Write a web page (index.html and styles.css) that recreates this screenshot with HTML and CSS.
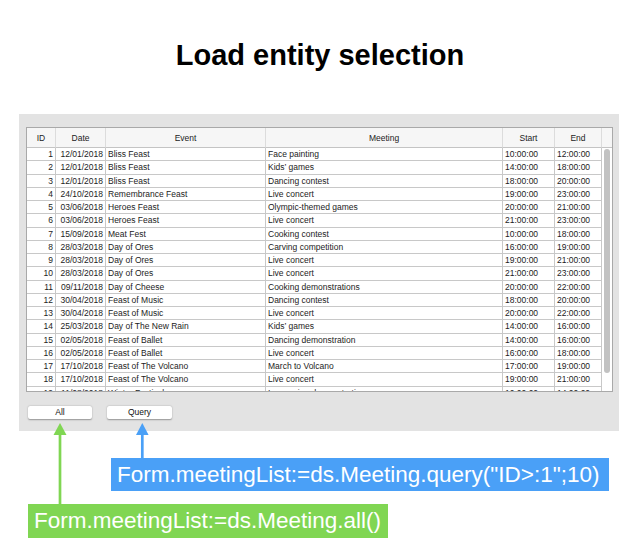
FILE: index.html
```html
<!DOCTYPE html>
<html>
<head>
<meta charset="utf-8">
<link rel="stylesheet" href="styles.css">
</head>
<body>
<h1 class="title">Load entity selection</h1>
<div class="panel">
  <div class="grid-wrap">
    <div class="grid">
      <div class="hc">ID</div><div class="hc">Date</div><div class="hc">Event</div><div class="hc">Meeting</div><div class="hc">Start</div><div class="hc">End</div><div class="hc sbh"></div>

      <div class="c r">1</div><div class="c r">12/01/2018</div><div class="c">Bliss Feast</div><div class="c">Face painting</div><div class="c">10:00:00</div><div class="c">12:00:00</div><div class="sb"></div>
      <div class="c r">2</div><div class="c r">12/01/2018</div><div class="c">Bliss Feast</div><div class="c">Kids’ games</div><div class="c">14:00:00</div><div class="c">18:00:00</div><div class="sb"></div>
      <div class="c r">3</div><div class="c r">12/01/2018</div><div class="c">Bliss Feast</div><div class="c">Dancing contest</div><div class="c">18:00:00</div><div class="c">20:00:00</div><div class="sb"></div>
      <div class="c r">4</div><div class="c r">24/10/2018</div><div class="c">Remembrance Feast</div><div class="c">Live concert</div><div class="c">19:00:00</div><div class="c">23:00:00</div><div class="sb"></div>
      <div class="c r">5</div><div class="c r">03/06/2018</div><div class="c">Heroes Feast</div><div class="c">Olympic-themed games</div><div class="c">20:00:00</div><div class="c">21:00:00</div><div class="sb"></div>
      <div class="c r">6</div><div class="c r">03/06/2018</div><div class="c">Heroes Feast</div><div class="c">Live concert</div><div class="c">21:00:00</div><div class="c">23:00:00</div><div class="sb"></div>
      <div class="c r">7</div><div class="c r">15/09/2018</div><div class="c">Meat Fest</div><div class="c">Cooking contest</div><div class="c">10:00:00</div><div class="c">18:00:00</div><div class="sb"></div>
      <div class="c r">8</div><div class="c r">28/03/2018</div><div class="c">Day of Ores</div><div class="c">Carving competition</div><div class="c">16:00:00</div><div class="c">19:00:00</div><div class="sb"></div>
      <div class="c r">9</div><div class="c r">28/03/2018</div><div class="c">Day of Ores</div><div class="c">Live concert</div><div class="c">19:00:00</div><div class="c">21:00:00</div><div class="sb"></div>
      <div class="c r">10</div><div class="c r">28/03/2018</div><div class="c">Day of Ores</div><div class="c">Live concert</div><div class="c">21:00:00</div><div class="c">23:00:00</div><div class="sb"></div>
      <div class="c r">11</div><div class="c r">09/11/2018</div><div class="c">Day of Cheese</div><div class="c">Cooking demonstrations</div><div class="c">20:00:00</div><div class="c">22:00:00</div><div class="sb"></div>
      <div class="c r">12</div><div class="c r">30/04/2018</div><div class="c">Feast of Music</div><div class="c">Dancing contest</div><div class="c">18:00:00</div><div class="c">20:00:00</div><div class="sb"></div>
      <div class="c r">13</div><div class="c r">30/04/2018</div><div class="c">Feast of Music</div><div class="c">Live concert</div><div class="c">20:00:00</div><div class="c">22:00:00</div><div class="sb"></div>
      <div class="c r">14</div><div class="c r">25/03/2018</div><div class="c">Day of The New Rain</div><div class="c">Kids’ games</div><div class="c">14:00:00</div><div class="c">16:00:00</div><div class="sb"></div>
      <div class="c r">15</div><div class="c r">02/05/2018</div><div class="c">Feast of Ballet</div><div class="c">Dancing demonstration</div><div class="c">14:00:00</div><div class="c">16:00:00</div><div class="sb"></div>
      <div class="c r">16</div><div class="c r">02/05/2018</div><div class="c">Feast of Ballet</div><div class="c">Live concert</div><div class="c">16:00:00</div><div class="c">18:00:00</div><div class="sb"></div>
      <div class="c r">17</div><div class="c r">17/10/2018</div><div class="c">Feast of The Volcano</div><div class="c">March to Volcano</div><div class="c">17:00:00</div><div class="c">19:00:00</div><div class="sb"></div>
      <div class="c r">18</div><div class="c r">17/10/2018</div><div class="c">Feast of The Volcano</div><div class="c">Live concert</div><div class="c">19:00:00</div><div class="c">21:00:00</div><div class="sb"></div>
      <div class="c r">19</div><div class="c r">11/08/2018</div><div class="c">Winter Festival</div><div class="c">Ice carving demonstration</div><div class="c">10:00:00</div><div class="c">14:00:00</div><div class="sb"></div>
    </div>
    <div class="thumb"></div>
  </div>
  <div class="buttons">
    <button class="btn btn-all">All</button>
    <button class="btn btn-query">Query</button>
  </div>
</div>
<div class="notes">
  <svg class="arrows" width="200" height="100" viewBox="0 0 200 100">
    <line x1="60" y1="12" x2="60" y2="84" stroke="#80d653" stroke-width="2.7"/>
    <polygon points="60,3 53.5,15 66.5,15" fill="#80d653"/>
    <line x1="142.3" y1="12" x2="142.3" y2="38" stroke="#4aa0f7" stroke-width="2.7"/>
    <polygon points="142.3,3 136,15 148.6,15" fill="#4aa0f7"/>
  </svg>
  <div class="label label-blue">Form.meetingList:=ds.Meeting.query("ID&gt;:1";10)</div>
  <div class="label label-green">Form.meetingList:=ds.Meeting.all()</div>
</div>
</body>
</html>
```

FILE: styles.css
```css
html, body {
  margin: 0;
  padding: 0;
  background: #ffffff;
}
body {
  width: 640px;
  height: 560px;
  overflow: hidden;
  font-family: "Liberation Sans", Arial, sans-serif;
}
.title {
  margin: 0;
  height: 114px;
  box-sizing: border-box;
  padding-top: 39px;
  font-size: 29px;
  line-height: 32px;
  font-weight: bold;
  color: #000;
  text-align: center;
}
.panel {
  margin-left: 19px;
  width: 600px;
  height: 317px;
  box-sizing: border-box;
  padding: 13px 7px 0 7px;
  background: #e3e3e3;
}
.grid-wrap {
  position: relative;
  width: 587px;
  height: 265px;
  box-sizing: border-box;
  border: 1px solid #a9a9a9;
  background: #fff;
  overflow: hidden;
}
.grid {
  display: grid;
  grid-template-columns: 29px 50px 160px 237px 52px 47px 10px;
  grid-template-rows: 20px;
  grid-auto-rows: 13.25px;
  font-size: 8.5px;
  color: #1c1c1c;
}
.hc {
  background: #f6f6f6;
  border-right: 1px solid #dcdcdc;
  border-bottom: 1px solid #c4c4c4;
  box-sizing: border-box;
  display: flex;
  align-items: center;
  justify-content: center;
  white-space: nowrap;
}
.hc.sbh {
  border-right: none;
}
.c {
  box-sizing: border-box;
  border-right: 1px solid #c8c8c8;
  border-bottom: 1px solid #c8c8c8;
  display: flex;
  align-items: center;
  padding: 0 2px;
  white-space: nowrap;
  overflow: hidden;
}
.c.r {
  justify-content: flex-end;
  padding: 0 2px 0 0;
}
.sb {
  background: #fff;
}
.thumb {
  position: absolute;
  left: 577px;
  top: 21px;
  width: 6px;
  height: 224px;
  border-radius: 3px;
  background: #c2c2c2;
}
.buttons {
  display: flex;
  gap: 15px;
  margin: 14px 0 0 2px;
}
.btn {
  height: 13px;
  padding: 0;
  margin: 0;
  border: none;
  border-radius: 2px;
  background: #fff;
  box-shadow: 0 0.5px 1.5px rgba(0, 0, 0, 0.35);
  font-family: "Liberation Sans", Arial, sans-serif;
  font-size: 8.5px;
  color: #111;
  line-height: 13px;
}
.btn-all { width: 64px; }
.btn-query { width: 65px; }
.notes {
  position: relative;
  padding-top: 27px;
}
.arrows {
  position: absolute;
  left: 0;
  top: -11px;
}
.label {
  width: fit-content;
  box-sizing: border-box;
  height: 33px;
  line-height: 33px;
  padding: 0 6px;
  font-size: 22.5px;
  color: #fff;
  white-space: nowrap;
}
.label-blue {
  margin-left: 111px;
  width: 498px;
  background: #4aa0f7;
}
.label-green {
  margin-top: 13px;
  margin-left: 28px;
  width: 360px;
  height: 34px;
  line-height: 34px;
  background: #80d653;
}
```
